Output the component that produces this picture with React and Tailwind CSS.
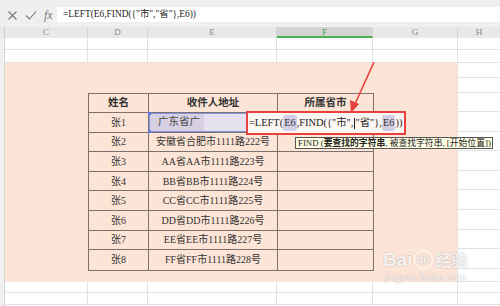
import React from 'react';

const cols = [
  { name: 'C', w: 'w-[83px]' },
  { name: 'D', w: 'w-[60px]' },
  { name: 'E', w: 'w-[129px]' },
  { name: 'F', w: 'w-[96px]' },
  { name: 'G', w: 'w-[85px]' },
];

const rows = [
  ['张2', '安徽省合肥市1111路222号'],
  ['张3', 'AA省AA市1111路223号'],
  ['张4', 'BB省BB市1111路224号'],
  ['张5', 'CC省CC市1111路225号'],
  ['张6', 'DD省DD市1111路226号'],
  ['张7', 'EE省EE市1111路227号'],
  ['张8', 'FF省FF市1111路228号'],
];

function GridRow({ h }) {
  return (
    <div className={`flex ${h}`}>
      {cols.map((c) => (
        <div key={c.name} className={`${c.w} border-r border-b border-[#e2e2e2]`} />
      ))}
    </div>
  );
}

function Pill({ children }) {
  return <span className="bg-[#d3cfe6] rounded-[3px] px-[1px] text-[#333]">{children}</span>;
}

export default function App() {
  const font = "font-['Liberation_Serif','Noto_Sans_CJK_SC',serif]";
  return (
    <div className={`relative w-[500px] h-[306px] overflow-hidden bg-white text-[#333] ${font}`}>
      {/* formula bar */}
      <div className="h-[27px] bg-[#efefef] flex items-start">
        <div className="w-[57px] h-full flex items-center gap-[7px] pl-[7px] text-[#777]">
          <svg width="11" height="11" viewBox="0 0 11 11" className="mt-[4px]">
            <path d="M1.5 1.5 L9.5 9.5 M9.5 1.5 L1.5 9.5" stroke="#777" strokeWidth="1.1" fill="none" />
          </svg>
          <svg width="12" height="11" viewBox="0 0 12 11" className="mt-[4px]">
            <path d="M1 5.5 L4.5 9 L11 1.5" stroke="#777" strokeWidth="1.1" fill="none" />
          </svg>
          <span className="italic text-[12px] mt-[3px] text-[#777]">fx</span>
        </div>
        <div className="flex-1 mt-[7px] h-[15px] bg-white flex items-center pl-[6px] text-[9.4px] text-[#222]">
          {'=LEFT(E6,FIND({"市","省"},E6))'}
        </div>
      </div>

      {/* column header */}
      <div className="flex h-[11px] bg-[#e8e8e8] text-[9px] text-[#888] leading-[11px]">
        <div className="w-[5px] border-r border-[#d0d0d0]" />
        {cols.map((c) => (
          <div
            key={c.name}
            className={`${c.w} text-center border-r border-[#d6d6d6] ${
              c.name === 'F' ? 'bg-[#d4d4d4] text-[#3ea34d] border-b-[2px] border-b-[#4caf50]' : ''
            }`}
          >
            {c.name}
          </div>
        ))}
        <div className="flex-1 text-center">H</div>
      </div>

      {/* body */}
      <div className="flex">
        <div className="w-[5px] border-r border-[#d6d6d6] bg-[#f0f0f0] h-[268px]" />
        <div className="w-[453px] flex flex-col">
          <GridRow h="h-[12px]" />
          <GridRow h="h-[13px]" />
          <div className="h-[219px] bg-[#fce4d6] pl-[83px] pt-[30px] border-r border-[#e2e2e2]">
            <div className="relative w-[286px] border border-[#7d716d] text-[10px]">
              <div className="flex h-[19px] border-b border-[#7d716d] font-bold text-[10.5px] items-center">
                <div className="w-[60px] h-full flex items-center justify-center border-r border-[#7d716d]">姓名</div>
                <div className="w-[129px] h-full flex items-center justify-center border-r border-[#7d716d]">收件人地址</div>
                <div className="flex-1 h-full flex items-center justify-center">所属省市</div>
              </div>
              {/* row 1 */}
              <div className="relative flex h-[19.6px] border-b border-[#7d716d]">
                <div className="w-[60px] h-full flex items-center justify-center border-r border-[#7d716d]">张1</div>
                <div className="relative w-[129px] h-full bg-[#e6e1ee] border border-[#7f95e8] flex items-center">
                  <span className="h-full flex items-center bg-[#d6d0e2] pl-[8px] pr-[4px] text-[10.5px] text-[#444]">广东省广</span>
                  <span className="absolute -left-[2px] -top-[2px] w-[3px] h-[3px] bg-[#5b78e0]" />
                  <span className="absolute -left-[2px] -bottom-[2px] w-[3px] h-[3px] bg-[#5b78e0]" />
                </div>
                <div className="flex-1 h-full border-y border-[#7dbf6a]" />
                {/* in-cell editor */}
                <div className="absolute left-[157px] -top-[2px] w-[160px] h-[24px] border-[2px] border-[#e8413e] bg-[#fdf7f4] flex items-center pl-[1px] text-[10.4px] whitespace-nowrap text-[#222]">
                  {'=LEFT('}<Pill>E6</Pill>{',FIND({"市",'}<span className="inline-block w-px h-[11px] bg-[#222] mx-[0.5px]" />{'"省"},'}<Pill>E6</Pill>{'))'}
                </div>
                {/* tooltip */}
                <div className="absolute left-[206px] top-[24px] w-[198px] h-[12px] bg-[#ffffe6] border border-[#555] flex items-center pl-[2px] text-[8.8px] leading-none whitespace-nowrap z-10 text-[#222]">
                  FIND (<span className="font-bold">要查找的字符串</span>, 被查找字符串, [开始位置])
                </div>
              </div>
              {rows.map(([n, a], i) => (
                <div
                  key={n}
                  className={`flex h-[19.6px] ${i < rows.length - 1 ? 'border-b border-[#7d716d]' : ''}`}
                >
                  <div className="w-[60px] h-full flex items-center justify-center border-r border-[#7d716d]">{n}</div>
                  <div className="w-[129px] h-full flex items-center justify-center border-r border-[#7d716d] text-[10px]">{a}</div>
                  <div className="flex-1 h-full" />
                </div>
              ))}
            </div>
          </div>
          <GridRow h="h-[11px]" />
          <GridRow h="h-[12px]" />
        </div>
        <div className="flex-1 flex flex-col">
          {[12, 13, 15, 15, 19, 19.6, 19.6, 19.6, 19.6, 19.6, 19.6, 19.6, 19.6, 13, 11, 12].map((h, i) => (
            <div key={i} className="border-b border-[#e2e2e2]" style={{ height: h }} />
          ))}
        </div>
      </div>

      {/* red arrow */}
      <svg className="absolute left-0 top-0 pointer-events-none" width="500" height="306">
        <line x1="374" y1="62" x2="355" y2="104" stroke="#e8413e" strokeWidth="1.6" />
        <polygon points="351,113 350,100 359,104" fill="#e8413e" />
      </svg>

      {/* watermark */}
      <div className="absolute left-[383px] top-[250px] flex flex-col items-center text-white/85 [text-shadow:0_0_1.5px_rgba(0,0,0,0.3)] font-['Liberation_Sans','Noto_Sans_CJK_SC',sans-serif]">
        <div className="flex items-end gap-[1px] text-[19px] font-bold leading-none">
          <span>Bai</span>
          <span className="w-[19px] h-[19px] rounded-full border border-white/90 text-[11px] flex items-center justify-center">du</span>
          <span className="text-[16px] ml-[2px]">经验</span>
        </div>
        <div className="text-[10px] mt-[4px] leading-none">jingyan.baidu.com</div>
      </div>
    </div>
  );
}
